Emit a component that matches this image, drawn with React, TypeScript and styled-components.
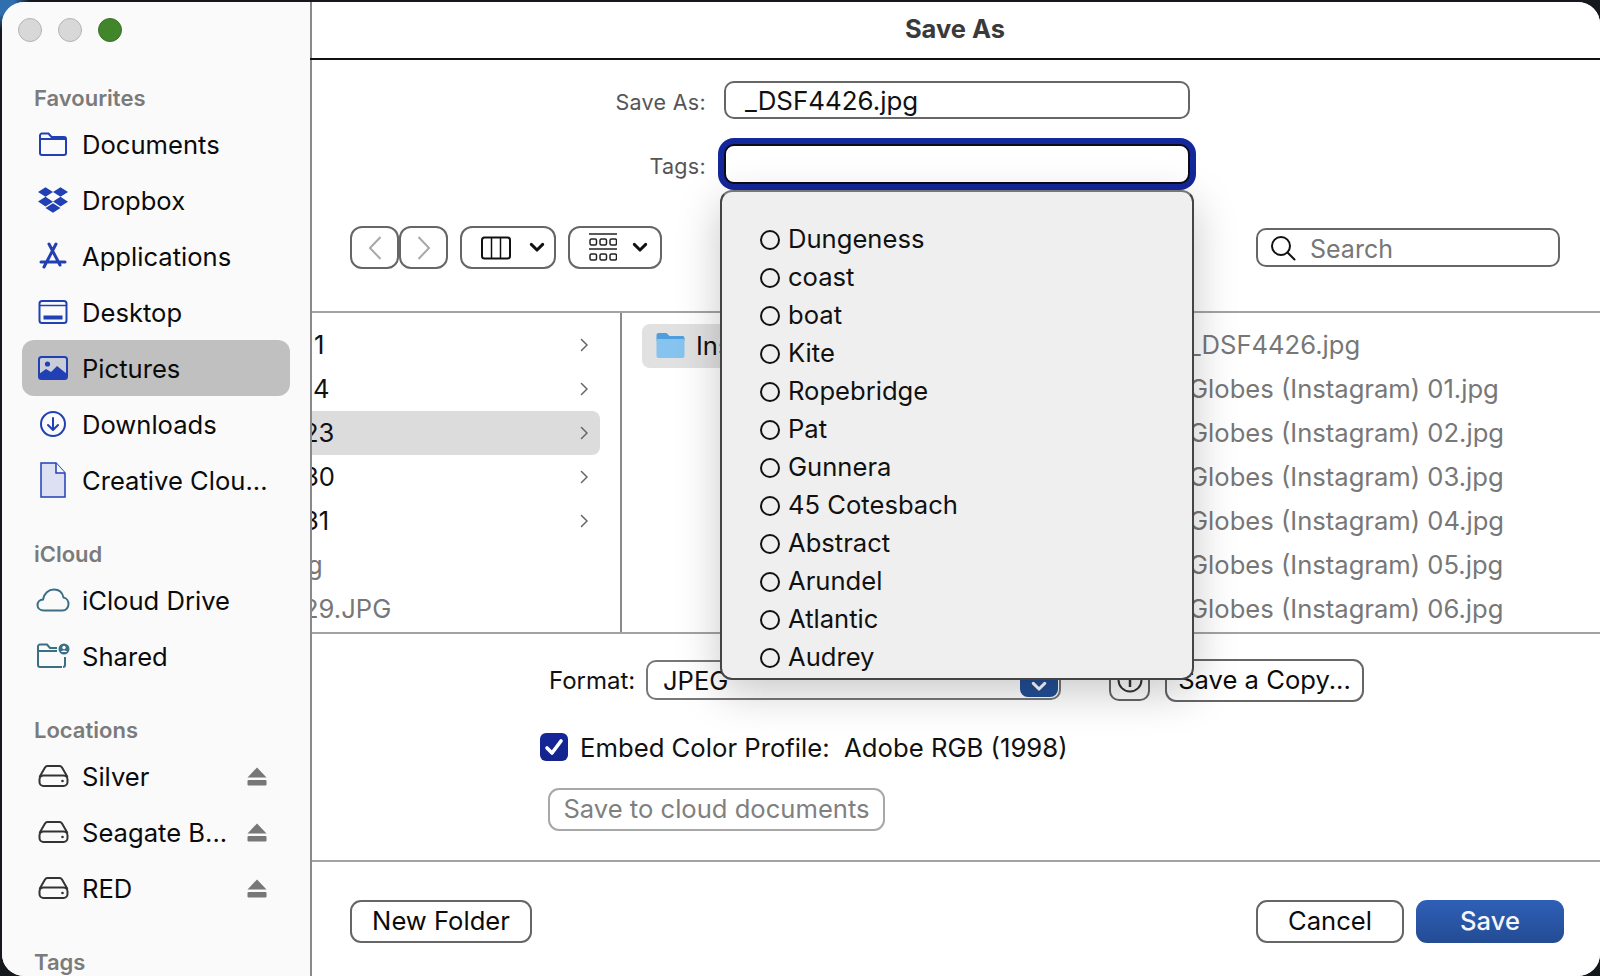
import React from 'react';
import styled, { createGlobalStyle } from 'styled-components';
import { FaDropbox } from 'react-icons/fa';

const GlobalStyle = createGlobalStyle`
	html, body {
		margin: 0;
		padding: 0;
		height: 100%;
	}
	* {
		box-sizing: border-box;
	}
	body {
		font-family: Inter, "Liberation Sans", sans-serif;
		overflow: hidden;
	}
`;

const BLUE = '#2140b4';
const TEAL = '#3b6f84';

const Desktop = styled.div`
	width: 1600px;
	height: 976px;
	padding: 2px 0 0 2px;
	background: radial-gradient(circle at 0 0, #2f6fb0 0, #2f6fb0 14px, #15181d 30px);
	overflow: hidden;
`;

const Window = styled.div`
	display: flex;
	width: 100%;
	height: 100%;
	background: #fff;
	border-radius: 22px;
	overflow: hidden;
`;

const Sidebar = styled.aside`
	flex: 0 0 308px;
	padding-top: 16px;
	background: #fafafa;
	overflow: hidden;
`;

const Lights = styled.div`
	display: flex;
	gap: 16px;
	padding-left: 16px;
	height: 62px;
`;

const Light = styled.span<{ $green?: boolean }>`
	width: 24px;
	height: 24px;
	border-radius: 50%;
	background: ${(p) => (p.$green ? '#41862a' : '#d8d8d8')};
	border: 1.5px solid ${(p) => (p.$green ? '#3a6f2a' : '#b4b4b4')};
`;

const SectionHead = styled.div<{ $first?: boolean }>`
	display: flex;
	align-items: center;
	height: 36px;
	margin-top: ${(p) => (p.$first ? '0' : '28px')};
	padding-left: 32px;
	font-size: 22px;
	font-weight: 600;
	color: #7b7b7b;
`;

const SideItem = styled.div<{ $selected?: boolean }>`
	display: flex;
	align-items: center;
	height: 56px;
	margin: 0 20px;
	padding: 0 23px 0 15px;
	border-radius: 12px;
	background: ${(p) => (p.$selected ? '#c0c0c0' : 'transparent')};
	font-size: 25.6px;
	color: #0b0b0b;
	white-space: nowrap;
`;

const SideIcon = styled.span`
	display: flex;
	align-items: center;
	justify-content: center;
	flex: 0 0 32px;
	min-width: 0;
	margin-right: 13px;

	svg {
		flex: none;
	}
`;

const Eject = styled.svg`
	margin-left: auto;
	flex: none;
`;

const Main = styled.main`
	position: relative;
	flex: 1;
	min-width: 0;
	border-left: 2px solid #8a8a8a;
	background: #fff;
`;

const TitleBar = styled.header`
	display: flex;
	align-items: center;
	justify-content: center;
	height: 58px;
	margin-left: -2px;
	padding-bottom: 3px;
	border-bottom: 2px solid #111;
	font-size: 25.5px;
	font-weight: 700;
	color: #3a3a3a;
`;

const FormRow = styled.div<{ $gapTop: number }>`
	display: flex;
	align-items: center;
	margin-top: ${(p) => p.$gapTop}px;
`;

const FieldLabel = styled.label`
	flex: 0 0 394px;
	padding-top: 4px;
	text-align: right;
	font-size: 21.5px;
	letter-spacing: 0.3px;
	color: #555;
`;

const TextField = styled.div<{ $focused?: boolean }>`
	position: relative;
	display: flex;
	align-items: center;
	width: 466px;
	height: ${(p) => (p.$focused ? '40px' : '38px')};
	margin-left: 18px;
	padding-left: 19px;
	border: 2px solid ${(p) => (p.$focused ? '#0c0c18' : '#666')};
	border-radius: 10px;
	background: #fff;
	font-size: 25.9px;
	color: #111;
	box-shadow: ${(p) => (p.$focused ? '0 0 0 6px #14279b' : 'none')};
`;

const Toolbar = styled.div`
	display: flex;
	align-items: center;
	height: 43px;
	margin-top: 42px;
	padding: 0 40px 0 38px;
`;

const NavButton = styled.div`
	display: flex;
	align-items: center;
	justify-content: center;
	width: 49px;
	height: 43px;
	border: 2px solid #666;
	border-radius: 12px;
	background: #fff;
`;

const ViewButton = styled.div<{ $width: number; $inset: number; $gap: number }>`
	display: flex;
	align-items: center;
	gap: ${(p) => p.$gap}px;
	width: ${(p) => p.$width}px;
	height: 43px;
	margin-left: 12px;
	padding-left: ${(p) => p.$inset}px;
	border: 2px solid #666;
	border-radius: 12px;
	background: #fff;
`;

const LocationPicker = styled.div`
	width: 474px;
	height: 44px;
	margin-left: 58px;
	border: 2px solid #333;
	border-radius: 10px;
`;

const SearchBox = styled.div`
	display: flex;
	align-items: center;
	gap: 14px;
	width: 304px;
	height: 39px;
	margin-left: auto;
	padding-left: 12px;
	border: 2px solid #666;
	border-radius: 10px;
	font-size: 25px;
	color: #777;
`;

const SearchText = styled.span`
	padding-top: 2px;
`;

const Browser = styled.section`
	display: flex;
	height: 323px;
	margin-top: 42px;
	border-top: 2px solid #a3a3a3;
	border-bottom: 2px solid #a3a3a3;
	overflow: hidden;
`;

const Column = styled.div<{ $width?: number; $divider?: boolean }>`
	flex: ${(p) => (p.$width ? `0 0 ${p.$width}px` : '1')};
	padding-top: 10px;
	min-width: 0;
	overflow: hidden;
	border-right: ${(p) => (p.$divider ? '2px solid #8a8a8a' : 'none')};
`;

const ColumnRow = styled.div<{ $selected?: boolean; $muted?: boolean }>`
	display: flex;
	align-items: center;
	justify-content: space-between;
	height: 44px;
	margin-right: 20px;
	padding-right: 12px;
	border-radius: 0 8px 8px 0;
	background: ${(p) => (p.$selected ? '#dcdcdc' : 'transparent')};
	font-size: 25.6px;
	color: ${(p) => (p.$muted ? '#777' : '#111')};
	white-space: nowrap;
`;

const ClippedName = styled.span<{ $shift: number }>`
	margin-left: ${(p) => p.$shift}px;
	padding-bottom: 2px;
`;

const FolderRow = styled.div`
	display: flex;
	align-items: center;
	gap: 10px;
	height: 44px;
	margin: 1px 0 0 20px;
	padding: 0 0 2px 13px;
	border-radius: 8px;
	background: #e1e1e1;
	font-size: 25.6px;
	color: #111;
`;

const FileRow = styled.div`
	display: flex;
	align-items: center;
	height: 44px;
	padding: 0 0 2px 17px;
	font-size: 25.6px;
	color: #777;
	white-space: nowrap;
`;

const Options = styled.section`
	padding-top: 25px;
`;

const FormatRow = styled.div`
	display: flex;
	align-items: center;
	height: 42px;
	padding-left: 237px;
`;

const FormatLabel = styled.span`
	width: 97px;
	font-size: 24px;
	color: #111;
`;

const SelectBox = styled.div`
	display: flex;
	align-items: center;
	justify-content: space-between;
	width: 415px;
	height: 40px;
	padding: 0 1px 0 15px;
	border: 2px solid #777;
	border-radius: 10px;
	font-size: 25.6px;
	color: #111;
`;

const Stepper = styled.span`
	display: flex;
	align-items: flex-end;
	justify-content: center;
	width: 38px;
	height: 34px;
	padding-bottom: 6px;
	border-radius: 8px;
	background: #234f96;
`;

const InfoButton = styled.div`
	display: flex;
	align-items: center;
	justify-content: center;
	width: 41px;
	height: 41px;
	margin-left: 48px;
	border: 2px solid #666;
	border-radius: 10px;
`;

const PlainButton = styled.button<{ $width: number; $primary?: boolean; $gapLeft?: number; $disabled?: boolean }>`
	flex: none;
	width: ${(p) => p.$width}px;
	height: 43px;
	margin-left: ${(p) => p.$gapLeft ?? 0}px;
	padding: 0 0 2px;
	border: ${(p) => (p.$primary ? 'none' : `2px solid ${p.$disabled ? '#a8a8a8' : '#666'}`)};
	border-radius: 11px;
	background: ${(p) => (p.$primary ? 'linear-gradient(#2f5fb8, #234c93)' : '#fff')};
	font-family: inherit;
	font-size: 25.6px;
	font-weight: ${(p) => (p.$primary ? 500 : 400)};
	color: ${(p) => (p.$primary ? '#f4f6fb' : p.$disabled ? '#808080' : '#0b0b0b')};
`;

const EmbedRow = styled.div`
	display: flex;
	align-items: center;
	gap: 12px;
	height: 28px;
	margin-top: 32px;
	padding-left: 228px;
	font-size: 25.7px;
	color: #111;
	white-space: pre;
`;

const CheckBox = styled.span`
	display: flex;
	align-items: center;
	justify-content: center;
	width: 28px;
	height: 28px;
	border-radius: 6px;
	background: linear-gradient(#14279b, #14248a);
`;

const CloudRow = styled.div`
	margin-top: 27px;
	padding-left: 236px;
`;

const Footer = styled.footer`
	display: flex;
	align-items: center;
	margin-top: 29px;
	padding: 38px 36px 0 38px;
	border-top: 2px solid #a3a3a3;
`;

const TagMenu = styled.div`
	position: absolute;
	top: 44px;
	left: -6px;
	z-index: 5;
	width: 474px;
	height: 490px;
	padding-top: 27px;
	background: #efefef;
	border: 2px solid #444;
	border-top-color: #777;
	border-radius: 12px;
	box-shadow: 0 12px 44px rgba(0, 0, 0, 0.22);
	overflow: hidden;
`;

const TagRow = styled.div`
	display: flex;
	align-items: center;
	gap: 8px;
	height: 38px;
	padding-left: 38px;
	font-size: 25.6px;
	color: #111;
`;

const TagDot = styled.span`
	flex: none;
	width: 20px;
	height: 20px;
	margin-top: 4px;
	border: 2px solid #111;
	border-radius: 50%;
`;

const FolderIcon = () => (
	<svg width="30" height="26" viewBox="0 0 30 26" fill="none" stroke={BLUE} strokeWidth="2">
		<path d="M2 6.5V4.500A2 2 0 0 1 4 2.500h6.500l3 3.500H26a2 2 0 0 1 2 2v14a2 2 0 0 1-2 2H4a2 2 0 0 1-2-2z" />
		<path d="M2 8h26" />
	</svg>
);

const AppsIcon = () => (
	<svg width="30" height="28" viewBox="0 0 30 28" fill="none" stroke={BLUE} strokeWidth="3" strokeLinecap="round">
		<path d="M11 2l11 21M18 2L6 25M3 20h24" />
	</svg>
);

const DesktopIcon = () => (
	<svg width="30" height="24" viewBox="0 0 30 24" fill="none">
		<rect x="1.500" y="1" width="27" height="22" rx="2.500" stroke={BLUE} strokeWidth="2" />
		<path d="M2 5.500h26" stroke={BLUE} strokeWidth="1.500" />
		<rect x="5.500" y="15.500" width="19" height="4" fill={BLUE} />
	</svg>
);

const PicturesIcon = () => (
	<svg width="30" height="24" viewBox="0 0 30 24">
		<rect x="1" y="1" width="28" height="22" rx="2.500" fill="#c9cdd8" stroke={BLUE} strokeWidth="2" />
		<circle cx="9.500" cy="8" r="2.600" fill={BLUE} />
		<path d="M1 23v-5l7-5 5 3 6-6 10 8v5z" fill={BLUE} />
	</svg>
);

const DownloadsIcon = () => (
	<svg width="28" height="28" viewBox="0 0 28 28" fill="none" stroke={BLUE} strokeWidth="2" strokeLinecap="round" strokeLinejoin="round">
		<circle cx="14" cy="14" r="12" />
		<path d="M14 8v12M9 15l5 5 5-5" />
	</svg>
);

const DocIcon = () => (
	<svg width="28" height="36" viewBox="0 0 28 36" stroke={BLUE} strokeWidth="1.500">
		<path d="M2 1h15l9 10v24H2z" fill="#dde0f2" />
		<path d="M17 1v10h9" fill="#f4f5fb" />
	</svg>
);

const CloudIcon = () => (
	<svg width="34" height="24" viewBox="0 0 34 24" fill="none" stroke={TEAL} strokeWidth="2">
		<path d="M8 22.500C4 22.500 1.500 20 1.500 17c0-3 2.300-5.300 5.500-5.500C8 5.500 12.500 1.500 18 1.500c5 0 8.500 3.200 9.500 8 3 .5 5 3.500 5 6.500 0 3.500-2.500 6.500-6 6.500z" />
	</svg>
);

const SharedIcon = () => (
	<svg width="34" height="26" viewBox="0 0 34 26" fill="none">
		<path d="M26 24H4a2 2 0 0 1-2-2V3.500A2 2 0 0 1 4 1.500h7l3 3.500h7M2 8h19M29 14v8a2 2 0 0 1-2 2" stroke={TEAL} strokeWidth="2" />
		<circle cx="28" cy="6" r="5.500" fill={TEAL} />
		<circle cx="28" cy="4.500" r="1.700" fill="#fff" />
		<path d="M25 9c.5-2 5.500-2 6 0z" fill="#fff" />
	</svg>
);

const DriveIcon = () => (
	<svg width="31" height="22" viewBox="0 0 31 22" fill="none" stroke="#333" strokeWidth="2">
		<path d="M1.500 12L7 2.500A3 3 0 0 1 9.500 1h12A3 3 0 0 1 24 2.500L29.500 12" />
		<rect x="1.500" y="10.500" width="28" height="10.500" rx="4" />
		<circle cx="24.500" cy="16" r="1.300" fill="#333" stroke="none" />
	</svg>
);

const EjectIcon = () => (
	<Eject width="20" height="19" viewBox="0 0 20 19" fill="#777">
		<path d="M10 0.500L19.500 10.500H0.500z" />
		<rect x="0.500" y="13" width="19" height="5.500" rx="1" />
	</Eject>
);

const ColumnChevron = () => (
	<svg width="8" height="14" viewBox="0 0 8 14" fill="none" stroke="#666" strokeWidth="1.500" strokeLinecap="round">
		<path d="M1.500 1.500L7 7l-5.500 5.500" />
	</svg>
);

const NavChevron = ({ back }: { back?: boolean }) => (
	<svg width="14" height="24" viewBox="0 0 14 24" fill="none" stroke="#a8a8a8" strokeWidth="2">
		<path d={back ? 'M12.500 1L2 12l10.500 11' : 'M1.500 1L12 12 1.500 23'} />
	</svg>
);

const DownChevron = ({ color = '#111', size = 16 }: { color?: string; size?: number }) => (
	<svg width={size} height={size * 0.65} viewBox="0 0 14 9" fill="none" stroke={color} strokeWidth="2.600" strokeLinecap="round" strokeLinejoin="round">
		<path d="M2 2l5 5 5-5" />
	</svg>
);

const ColumnsIcon = () => (
	<svg width="30" height="24" viewBox="0 0 30 24" fill="none" stroke="#111" strokeWidth="2">
		<rect x="1" y="1.500" width="28" height="21" rx="2.500" />
		<path d="M10.500 2v20M19.500 2v20" strokeWidth="1.500" />
	</svg>
);

const GroupIcon = () => (
	<svg width="28" height="30" viewBox="0 0 28 30" fill="none" stroke="#222" strokeWidth="1.500">
		<path d="M0 1h28M0 16h28" />
		<rect x="1" y="6" width="6.500" height="6" rx="1.500" />
		<rect x="11" y="6" width="6.500" height="6" rx="1.500" />
		<rect x="21" y="6" width="6.500" height="6" rx="1.500" />
		<rect x="1" y="21" width="6.500" height="6" rx="1.500" />
		<rect x="11" y="21" width="6.500" height="6" rx="1.500" />
		<rect x="21" y="21" width="6.500" height="6" rx="1.500" />
	</svg>
);

const SearchIcon = () => (
	<svg width="26" height="26" viewBox="0 0 26 26" fill="none" stroke="#111" strokeWidth="2" strokeLinecap="round">
		<circle cx="11" cy="11" r="9" />
		<path d="M17.500 17.500L24.500 24.500" />
	</svg>
);

const BlueFolder = () => (
	<svg width="31" height="28" viewBox="0 0 30 28">
		<path d="M1 4a2 2 0 0 1 2-2h8l3 3h13a2 2 0 0 1 2 2v3H1z" fill="#4f9fdc" />
		<path d="M1 8h28v17a2 2 0 0 1-2 2H3a2 2 0 0 1-2-2z" fill="#86c4ef" />
	</svg>
);

const InfoIcon = () => (
	<svg width="26" height="26" viewBox="0 0 26 26" fill="none" stroke="#333" strokeWidth="2">
		<circle cx="13" cy="13" r="11.500" />
		<path d="M13 11v9" strokeWidth="2.500" />
	</svg>
);

const CheckIcon = () => (
	<svg width="20" height="18" viewBox="0 0 20 18" fill="none" stroke="#fff" strokeWidth="3.600" strokeLinecap="round" strokeLinejoin="round">
		<path d="M3 10l5 5L17 3" />
	</svg>
);

type SideEntry = { name: string; icon: React.ReactNode; selected?: boolean; eject?: boolean };

const favourites: SideEntry[] = [
	{ name: 'Documents', icon: <FolderIcon /> },
	{ name: 'Dropbox', icon: <FaDropbox size={30} color={BLUE} /> },
	{ name: 'Applications', icon: <AppsIcon /> },
	{ name: 'Desktop', icon: <DesktopIcon /> },
	{ name: 'Pictures', icon: <PicturesIcon />, selected: true },
	{ name: 'Downloads', icon: <DownloadsIcon /> },
	{ name: 'Creative Clou...', icon: <DocIcon /> },
];

const icloud: SideEntry[] = [
	{ name: 'iCloud Drive', icon: <CloudIcon /> },
	{ name: 'Shared', icon: <SharedIcon /> },
];

const locations: SideEntry[] = [
	{ name: 'Silver', icon: <DriveIcon />, eject: true },
	{ name: 'Seagate B...', icon: <DriveIcon />, eject: true },
	{ name: 'RED', icon: <DriveIcon />, eject: true },
];

const folderRows = [
	{ name: '1', shift: 2 },
	{ name: '4', shift: 1 },
	{ name: '23', shift: -9, selected: true },
	{ name: '30', shift: -9 },
	{ name: '31', shift: -9 },
];

const files = [
	'_DSF4426.jpg',
	'Globes (Instagram) 01.jpg',
	'Globes (Instagram) 02.jpg',
	'Globes (Instagram) 03.jpg',
	'Globes (Instagram) 04.jpg',
	'Globes (Instagram) 05.jpg',
	'Globes (Instagram) 06.jpg',
];

const tags = [
	'Dungeness',
	'coast',
	'boat',
	'Kite',
	'Ropebridge',
	'Pat',
	'Gunnera',
	'45 Cotesbach',
	'Abstract',
	'Arundel',
	'Atlantic',
	'Audrey',
];

const SideList = ({ items }: { items: SideEntry[] }) => (
	<>
		{items.map((item) => (
			<SideItem key={item.name} $selected={item.selected}>
				<SideIcon>{item.icon}</SideIcon>
				{item.name}
				{item.eject && <EjectIcon />}
			</SideItem>
		))}
	</>
);

const App = () => (
	<Desktop>
		<GlobalStyle />
		<Window>
			<Sidebar>
				<Lights>
					<Light />
					<Light />
					<Light $green />
				</Lights>
				<SectionHead $first>Favourites</SectionHead>
				<SideList items={favourites} />
				<SectionHead>iCloud</SectionHead>
				<SideList items={icloud} />
				<SectionHead>Locations</SectionHead>
				<SideList items={locations} />
				<SectionHead>Tags</SectionHead>
			</Sidebar>
			<Main>
				<TitleBar>Save As</TitleBar>
				<FormRow $gapTop={21}>
					<FieldLabel>Save As:</FieldLabel>
					<TextField>_DSF4426.jpg</TextField>
				</FormRow>
				<FormRow $gapTop={25}>
					<FieldLabel>Tags:</FieldLabel>
					<TextField $focused>
						<TagMenu>
							{tags.map((tag) => (
								<TagRow key={tag}>
									<TagDot />
									{tag}
								</TagRow>
							))}
						</TagMenu>
					</TextField>
				</FormRow>
				<Toolbar>
					<NavButton>
						<NavChevron back />
					</NavButton>
					<NavButton>
						<NavChevron />
					</NavButton>
					<ViewButton $width={96} $inset={19} $gap={18}>
						<ColumnsIcon />
						<DownChevron />
					</ViewButton>
					<ViewButton $width={94} $inset={19} $gap={15}>
						<GroupIcon />
						<DownChevron />
					</ViewButton>
					<LocationPicker />
					<SearchBox>
						<SearchIcon />
						<SearchText>Search</SearchText>
					</SearchBox>
				</Toolbar>
				<Browser>
					<Column $width={310} $divider>
						{folderRows.map((row) => (
							<ColumnRow key={row.name} $selected={row.selected}>
								<ClippedName $shift={row.shift}>{row.name}</ClippedName>
								<ColumnChevron />
							</ColumnRow>
						))}
						<ColumnRow $muted>
							<ClippedName $shift={-5}>g</ClippedName>
						</ColumnRow>
						<ColumnRow $muted>
							<ClippedName $shift={-9}>29.JPG</ClippedName>
						</ColumnRow>
					</Column>
					<Column $width={550}>
						<FolderRow>
							<BlueFolder />
							Instagram
						</FolderRow>
					</Column>
					<Column>
						{files.map((file) => (
							<FileRow key={file}>{file}</FileRow>
						))}
					</Column>
				</Browser>
				<Options>
					<FormatRow>
						<FormatLabel>Format:</FormatLabel>
						<SelectBox>
							JPEG
							<Stepper>
								<DownChevron color="#fff" />
							</Stepper>
						</SelectBox>
						<InfoButton>
							<InfoIcon />
						</InfoButton>
						<PlainButton $width={199} $gapLeft={15}>
							Save a Copy...
						</PlainButton>
					</FormatRow>
					<EmbedRow>
						<CheckBox>
							<CheckIcon />
						</CheckBox>
						Embed Color Profile:  Adobe RGB (1998)
					</EmbedRow>
					<CloudRow>
						<PlainButton $width={337} $disabled>
							Save to cloud documents
						</PlainButton>
					</CloudRow>
				</Options>
				<Footer>
					<PlainButton $width={182}>New Folder</PlainButton>
					<PlainButton $width={148} $gapLeft={724}>
						Cancel
					</PlainButton>
					<PlainButton $width={148} $gapLeft={12} $primary>
						Save
					</PlainButton>
				</Footer>
			</Main>
		</Window>
	</Desktop>
);

export default App;
